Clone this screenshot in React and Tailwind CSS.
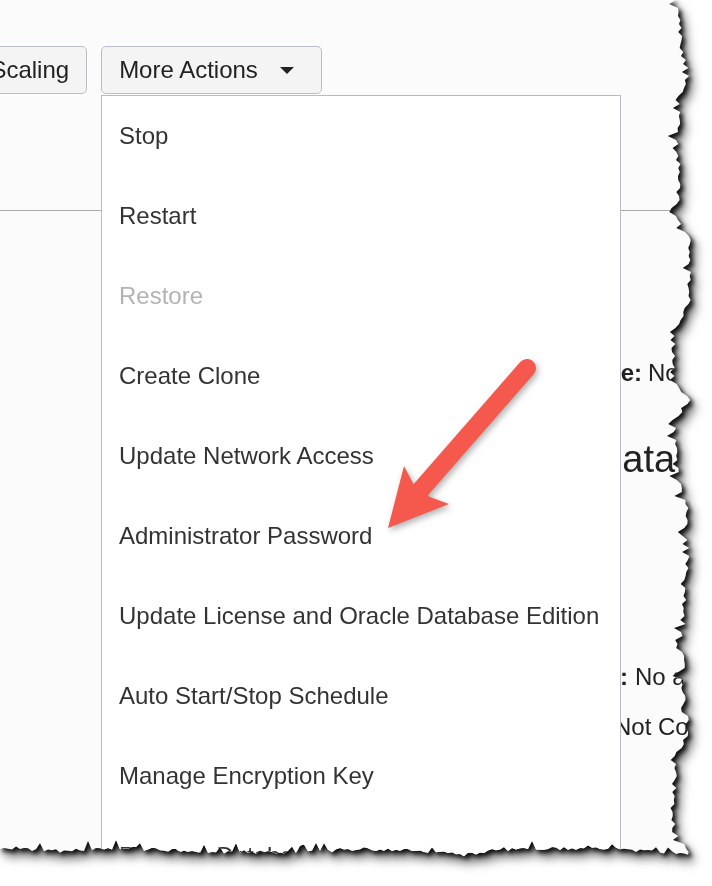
import React from 'react';

const menuItems = [
  { label: 'Stop' },
  { label: 'Restart' },
  { label: 'Restore', disabled: true },
  { label: 'Create Clone' },
  { label: 'Update Network Access' },
  { label: 'Administrator Password' },
  { label: 'Update License and Oracle Database Edition' },
  { label: 'Auto Start/Stop Schedule' },
  { label: 'Manage Encryption Key' },
  { label: 'Rename Database' },
  { label: 'Move Resource' },
  { label: 'Add Tags' },
  { label: 'Terminate' },
];

// piecewise profile of the torn paper edge
const rightProfile = [
  [0, 678], [30, 680], [60, 684], [75, 688], [100, 678], [200, 678], [210, 670],
  [225, 680], [240, 690], [300, 689], [340, 673], [380, 672], [400, 690], [420, 674],
  [470, 676], [500, 686], [540, 688], [600, 684], [640, 683], [700, 684], [730, 688],
  [760, 675], [830, 673], [853, 688],
];
const bottomProfile = [
  [0, 847], [60, 851], [120, 848], [200, 852], [300, 852], [360, 849], [440, 851],
  [460, 856], [500, 849], [600, 848], [688, 853],
];

function lerp(pts, v) {
  for (let i = 1; i < pts.length; i++) {
    const [a, av] = pts[i - 1];
    const [b, bv] = pts[i];
    if (v <= b) return av + ((v - a) / (b - a)) * (bv - av);
  }
  return pts[pts.length - 1][1];
}

function tornPolygon() {
  let seed = 11;
  const rnd = () => {
    seed = (seed * 16807) % 2147483647;
    return seed / 2147483647;
  };
  const pts = ['0px 0px'];
  for (let y = 0; y <= 852; y += 4) {
    let x = lerp(rightProfile, y) + (rnd() - 0.5) * 5;
    if (rnd() < 0.12) x -= 3 + rnd() * 6;
    pts.push(`${x.toFixed(1)}px ${y}px`);
  }
  for (let x = 688; x >= 0; x -= 4) {
    let y = lerp(bottomProfile, x) + (rnd() - 0.5) * 4;
    if (rnd() < 0.14) y -= 3 + rnd() * 6;
    pts.push(`${x}px ${y.toFixed(1)}px`);
  }
  pts.push('-2px 848px');
  return `polygon(${pts.join(', ')})`;
}

function Arrow() {
  return (
    <svg
      className="absolute inset-0 pointer-events-none [filter:drop-shadow(2px_3px_3px_rgba(0,0,0,0.3))]"
      width="712"
      height="886"
      viewBox="0 0 712 886"
    >
      <line x1="527" y1="368" x2="417" y2="494" stroke="#f5584c" strokeWidth="18" strokeLinecap="round" />
      <polygon points="388,528 404,466 414,485 430,497 449,504" fill="#f5584c" />
    </svg>
  );
}

export default function App() {
  return (
    <div className="relative w-[712px] h-[886px] overflow-hidden bg-white font-['Liberation_Sans',Arial,sans-serif]">
      <div className="w-full h-full [filter:drop-shadow(3px_3px_2px_rgba(0,0,0,0.85))_drop-shadow(3px_5px_5px_rgba(0,0,0,0.6))]">
        <div className="relative w-full h-full bg-[#fbfbfc]" style={{ clipPath: tornPolygon() }}>
          {/* action buttons */}
          <div className="flex gap-[14px] pt-[46px]">
            <button className="-ml-[121px] h-[48px] shrink-0 whitespace-nowrap rounded-[5px] border border-[#b9bfc8] bg-[#f4f4f5] px-[17px] text-[24px] text-[#222]">
              Manage Scaling
            </button>
            <button className="flex h-[48px] w-[221px] shrink-0 items-center rounded-[5px] border border-[#b9bfc8] bg-[#f4f4f5] pl-[17px] text-[24px] text-[#222]">
              <span>More Actions</span>
              <svg className="ml-[22px]" width="14" height="7" viewBox="0 0 14 7">
                <polygon points="0,0 14,0 7,7" fill="#222" />
              </svg>
            </button>
          </div>

          {/* details underneath the menu */}
          <div className="mt-[116px] border-t border-[#a9a9a9] text-[24px] text-[#222]">
            <div className="mt-[150px] flex h-[24px] items-center whitespace-nowrap leading-6">
              <span className="w-[642px] shrink-0 text-right font-bold">Dedicated Infrastructure:</span>
              <span className="ml-[6px]">No</span>
            </div>
            <h2 className="mt-[55px] whitespace-nowrap pl-[371px] text-[38px] font-normal leading-[38px]">
              Autonomous Data Guard
            </h2>
            <div className="mt-[187px] flex h-[24px] items-center whitespace-nowrap leading-6">
              <span className="w-[628px] shrink-0 text-right font-bold">Peer Status:</span>
              <span className="ml-[7px]">No active peer</span>
            </div>
            <div className="mt-[26px] flex h-[24px] items-center whitespace-nowrap leading-6">
              <span className="w-[608px] shrink-0 text-right font-bold">Role:</span>
              <span className="ml-[6px]">Not Configured</span>
            </div>
          </div>

          {/* open dropdown */}
          <div className="absolute left-[101px] top-[95px] w-[520px] border border-[#b6bcc5] bg-white">
            {menuItems.map((item) => (
              <div
                key={item.label}
                className={`flex h-[80px] items-center whitespace-nowrap pl-[17px] text-[24px] leading-6 ${
                  item.disabled ? 'text-[#b3b3b3]' : 'text-[#333]'
                }`}
              >
                {item.label}
              </div>
            ))}
          </div>

          <Arrow />
        </div>
      </div>
    </div>
  );
}
